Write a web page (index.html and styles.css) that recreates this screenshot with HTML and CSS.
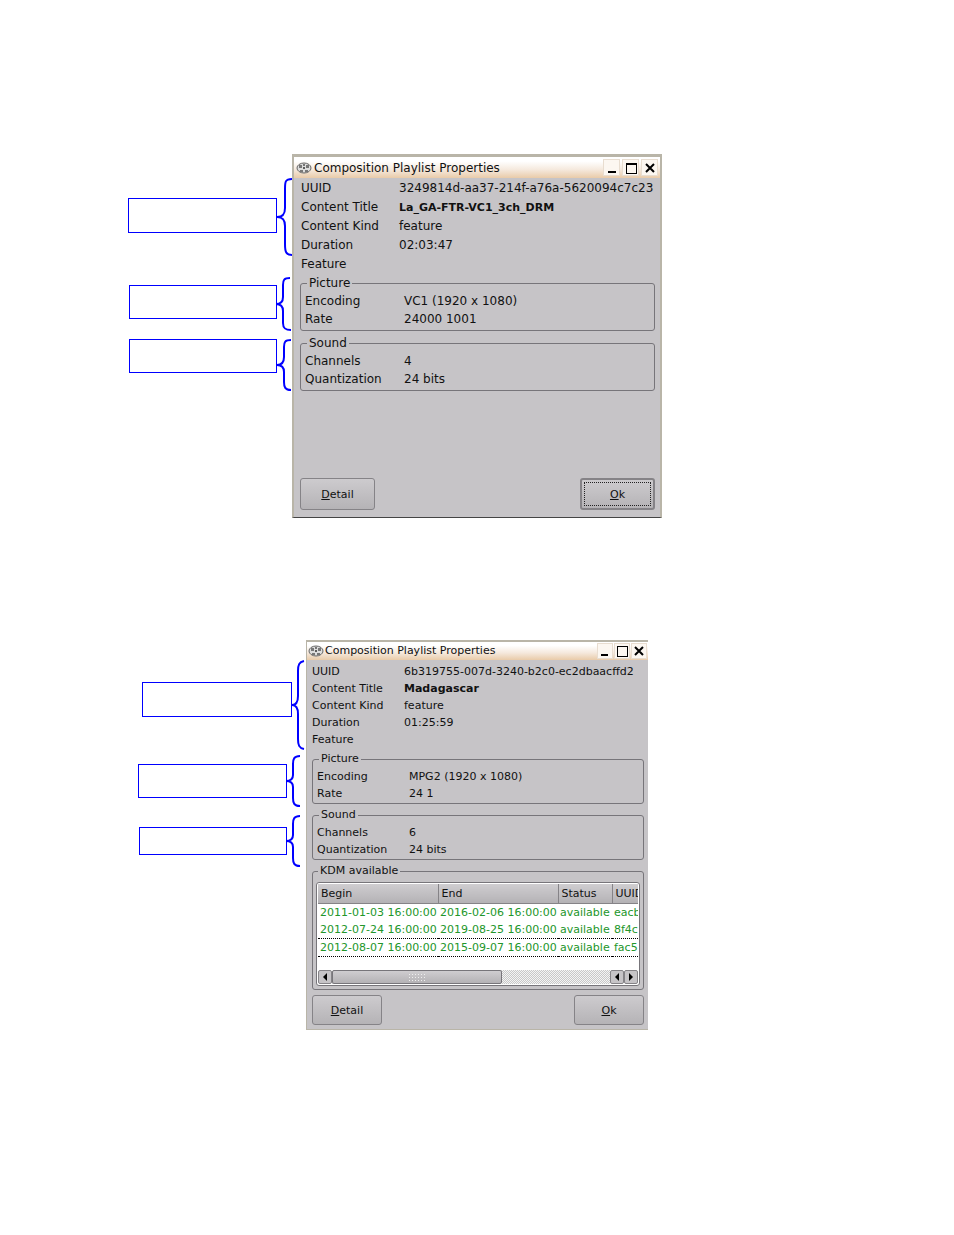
FILE: index.html
```html
<!DOCTYPE html>
<html lang="en">
<head>
    <meta charset="UTF-8">
    <meta name="viewport" content="width=device-width, initial-scale=1.0">
    <title>Composition Playlist Properties</title>
    <link rel="stylesheet" href="styles.css">
</head>
<body>
    <main>
        <section class="figure">
            <div class="callouts">
                <div class="callout callout-info">
                    <div class="callout-box"></div>
                    <svg class="brace" width="16" height="80" viewBox="0 0 16 80"><path d="M16 2C9 2 9 5 9 12V31C9 37 7 40 1 40C7 40 9 43 9 49V67C9 75 10 78 16 78"/></svg>
                </div>
                <div class="callout callout-picture">
                    <div class="callout-box"></div>
                    <svg class="brace" width="16" height="54" viewBox="0 0 16 54"><path d="M14 1C8 1 7 3 7 8V20C7 25 5 27 0 27C5 27 7 29 7 34V46C7 51 9 53 15 53"/></svg>
                </div>
                <div class="callout callout-sound">
                    <div class="callout-box"></div>
                    <svg class="brace" width="16" height="52" viewBox="0 0 16 52"><path d="M15 1C9 1 8 3 8 8V18C8 23 6 26 1 26C6 26 8 28 8 33V43C8 48 9 51 15 51"/></svg>
                </div>
            </div>
            <div class="window">
                <header class="titlebar">
                    <svg class="app-icon" width="16" height="12" viewBox="0 0 16 12"><ellipse cx="8" cy="6" rx="7" ry="5" fill="#ddd" stroke="#666"/><path d="M3 3h3v3H3zM10 3h3v3h-3zM7 2h2v2H7zM4 8h3v2H4zM9 8h3v2H9z" fill="#777"/><circle cx="8" cy="6" r="1" fill="#333"/></svg>
                    <h2>Composition Playlist Properties</h2>
                    <button class="win-btn" aria-label="Minimize"><svg width="12" height="12" viewBox="0 0 12 12"><path d="M2 10h8"/></svg></button>
                    <button class="win-btn" aria-label="Maximize"><svg width="12" height="12" viewBox="0 0 12 12"><path class="thin" d="M1 1h10v10H1zM1 2h10"/></svg></button>
                    <button class="win-btn" aria-label="Close"><svg width="12" height="12" viewBox="0 0 12 12"><path d="M2 2l8 8M10 2l-8 8"/></svg></button>
                </header>
                <dl class="props">
                    <dt>UUID</dt><dd>3249814d-aa37-214f-a76a-5620094c7c23</dd>
                    <dt>Content Title</dt><dd><strong>La_GA-FTR-VC1_3ch_DRM</strong></dd>
                    <dt>Content Kind</dt><dd>feature</dd>
                    <dt>Duration</dt><dd>02:03:47</dd>
                    <dt>Feature</dt><dd></dd>
                </dl>
                <fieldset>
                    <legend>Picture</legend>
                    <dl>
                        <dt>Encoding</dt><dd>VC1 (1920 x 1080)</dd>
                        <dt>Rate</dt><dd>24000 1001</dd>
                    </dl>
                </fieldset>
                <fieldset>
                    <legend>Sound</legend>
                    <dl>
                        <dt>Channels</dt><dd>4</dd>
                        <dt>Quantization</dt><dd>24 bits</dd>
                    </dl>
                </fieldset>
                <footer class="actions">
                    <button class="btn"><u>D</u>etail</button>
                    <button class="btn btn-default"><u>O</u>k</button>
                </footer>
            </div>
        </section>

        <section class="figure figure-kdm">
            <div class="callouts">
                <div class="callout callout-info">
                    <div class="callout-box"></div>
                    <svg class="brace" width="14" height="90" viewBox="0 0 14 90"><path d="M12 1C7 2 6 5 6 11V36C6 42 4 45 0 45C4 45 6 48 6 54V79C6 85 7 88 12 89"/></svg>
                </div>
                <div class="callout callout-picture">
                    <div class="callout-box"></div>
                    <svg class="brace" width="18" height="52" viewBox="0 0 18 52"><path d="M14 1C8 1 7 4 7 9V20C7 24 5 26 0 26C5 26 7 28 7 32V43C7 48 8 51 14 51"/></svg>
                </div>
                <div class="callout callout-sound">
                    <div class="callout-box"></div>
                    <svg class="brace" width="18" height="52" viewBox="0 0 18 52"><path d="M14 1C8 1 7 4 7 9V20C7 24 5 26 0 26C5 26 7 28 7 32V43C7 48 8 51 14 51"/></svg>
                </div>
            </div>
            <div class="window">
                <header class="titlebar">
                    <svg class="app-icon" width="16" height="12" viewBox="0 0 16 12"><ellipse cx="8" cy="6" rx="7" ry="5" fill="#ddd" stroke="#666"/><path d="M3 3h3v3H3zM10 3h3v3h-3zM7 2h2v2H7zM4 8h3v2H4zM9 8h3v2H9z" fill="#777"/><circle cx="8" cy="6" r="1" fill="#333"/></svg>
                    <h2>Composition Playlist Properties</h2>
                    <button class="win-btn" aria-label="Minimize"><svg width="12" height="12" viewBox="0 0 12 12"><path d="M2 10h7"/></svg></button>
                    <button class="win-btn" aria-label="Maximize"><svg width="12" height="12" viewBox="0 0 12 12"><path class="thin" d="M1 1h10v10H1z"/></svg></button>
                    <button class="win-btn" aria-label="Close"><svg width="12" height="12" viewBox="0 0 12 12"><path d="M2 2l8 8M10 2l-8 8"/></svg></button>
                </header>
                <dl class="props">
                    <dt>UUID</dt><dd>6b319755-007d-3240-b2c0-ec2dbaacffd2</dd>
                    <dt>Content Title</dt><dd><strong>Madagascar</strong></dd>
                    <dt>Content Kind</dt><dd>feature</dd>
                    <dt>Duration</dt><dd>01:25:59</dd>
                    <dt>Feature</dt><dd></dd>
                </dl>
                <fieldset>
                    <legend>Picture</legend>
                    <dl>
                        <dt>Encoding</dt><dd>MPG2 (1920 x 1080)</dd>
                        <dt>Rate</dt><dd>24 1</dd>
                    </dl>
                </fieldset>
                <fieldset>
                    <legend>Sound</legend>
                    <dl>
                        <dt>Channels</dt><dd>6</dd>
                        <dt>Quantization</dt><dd>24 bits</dd>
                    </dl>
                </fieldset>
                <fieldset class="kdm">
                    <legend>KDM available</legend>
                    <div class="list">
                        <div class="list-view">
                            <table>
                                <thead>
                                    <tr>
                                        <th class="col-date">Begin</th>
                                        <th class="col-date">End</th>
                                        <th class="col-status">Status</th>
                                        <th>UUID</th>
                                    </tr>
                                </thead>
                                <tbody>
                                    <tr><td>2011-01-03 16:00:00</td><td>2016-02-06 16:00:00</td><td>available</td><td>eacb</td></tr>
                                    <tr><td>2012-07-24 16:00:00</td><td>2019-08-25 16:00:00</td><td>available</td><td>8f4c</td></tr>
                                    <tr class="focused"><td>2012-08-07 16:00:00</td><td>2015-09-07 16:00:00</td><td>available</td><td>fac5</td></tr>
                                </tbody>
                            </table>
                        </div>
                        <div class="scrollbar">
                            <button class="arrow" aria-label="Scroll left"><svg width="6" height="8" viewBox="0 0 6 8"><path d="M5 0v8L1 4z"/></svg></button>
                            <div class="track"><div class="thumb"><span class="grip"></span></div></div>
                            <button class="arrow" aria-label="Scroll left"><svg width="6" height="8" viewBox="0 0 6 8"><path d="M5 0v8L1 4z"/></svg></button>
                            <button class="arrow" aria-label="Scroll right"><svg width="6" height="8" viewBox="0 0 6 8"><path d="M1 0v8l4-4z"/></svg></button>
                        </div>
                    </div>
                </fieldset>
                <footer class="actions">
                    <button class="btn"><u>D</u>etail</button>
                    <button class="btn"><u>O</u>k</button>
                </footer>
            </div>
        </section>
    </main>
</body>
</html>
```
FILE: styles.css
```css
* {
    box-sizing: border-box;
}
body {
    margin: 0;
    background-color: #fff;
    color: #111;
    font-family: "DejaVu Sans", sans-serif;
    font-size: 12px;
}
main {
    display: flex;
    flex-direction: column;
    gap: 122px;
    padding: 154px 40px 40px 128px;
}
.figure {
    display: grid;
    grid-template-columns: 164px minmax(0, 370px);
    line-height: 18px;
}
.figure-kdm {
    grid-template-columns: 178px minmax(0, 342px);
    font-size: 11px;
}

/* Callouts */
.callouts {
    padding-top: 23px;
}
.callout {
    display: flex;
    align-items: center;
    justify-content: flex-end;
}
.callout-box {
    width: 149px;
    height: 35px;
    margin-right: -1px;
    margin-bottom: 4px;
    border: 1px solid #00f;
}
.callout-picture {
    margin-top: 20px;
}
.callout-sound {
    margin-top: 8px;
    align-items: flex-start;
}
.callout-picture .callout-box,
.callout-sound .callout-box {
    width: 148px;
    height: 34px;
}
.brace {
    flex: none;
    fill: none;
    stroke: #00f;
    stroke-width: 2;
}
.figure-kdm .callouts {
    padding-top: 20px;
}
.figure-kdm .callout-box {
    width: 150px;
    margin-right: 0;
    margin-bottom: 12px;
}
.figure-kdm .callout-picture {
    margin-top: 5px;
    padding-right: 2px;
}
.figure-kdm .callout-sound {
    margin-top: 8px;
    padding-right: 2px;
    align-items: center;
}
.figure-kdm .callout-picture .callout-box,
.figure-kdm .callout-sound .callout-box {
    width: 149px;
    margin-right: -1px;
    margin-bottom: 0;
}
.figure-kdm .callout-sound .callout-box {
    width: 148px;
    height: 28px;
}

/* Windows */
.window {
    display: flex;
    flex-direction: column;
    min-height: 364px;
    padding: 0 5px 7px 6px;
    background-color: #c6c4c7;
    border: 2px solid #b9b5a8;
    border-top-width: 3px;
    border-bottom: 1px solid #444;
}
.figure-kdm .window {
    min-height: 390px;
    padding: 0 4px 4px 5px;
    border-width: 2px 0 1px 1px;
    border-bottom-color: #b9b5a8;
}
.titlebar {
    display: flex;
    align-items: center;
    gap: 2px;
    height: 21px;
    margin: 0 -5px 0 -6px;
    padding: 0 2px;
    background: linear-gradient(#fff 20%, #f5e9dd 60%, #e9cba9);
}
.figure-kdm .titlebar {
    height: 18px;
    margin: 0 -4px 0 -5px;
    padding: 0 1px;
    gap: 1px;
}
.titlebar h2 {
    flex: 1;
    margin: 0;
    font-size: inherit;
    font-weight: normal;
    white-space: nowrap;
}
.app-icon {
    flex: none;
}
.win-btn {
    display: flex;
    align-items: center;
    justify-content: center;
    width: 17px;
    height: 17px;
    padding: 0;
    background-color: #fcf7f1;
    border: 1px solid #e8ddd0;
}
.figure-kdm .win-btn {
    width: 16px;
    height: 16px;
}
.win-btn path {
    fill: none;
    stroke: #000;
    stroke-width: 2;
}
.win-btn .thin {
    stroke-width: 1;
    shape-rendering: crispEdges;
}

/* Properties */
dl {
    display: grid;
    grid-template-columns: 99px 1fr;
    margin: 0;
    white-space: nowrap;
}
.figure-kdm dl {
    grid-template-columns: 92px 1fr;
    line-height: 17px;
}
.props {
    grid-template-columns: 98px 1fr;
    padding: 1px 1px 0;
    line-height: 19px;
}
.figure-kdm .props {
    padding: 3px 0 2px;
}
dd {
    margin: 0;
}
strong {
    font-size: 11px;
}
fieldset {
    min-width: 0;
    margin: 0 0 3px;
    padding: 0 4px 2px;
    border: 1px solid #77757a;
    border-radius: 3px;
}
.figure-kdm fieldset {
    margin-bottom: 2px;
    padding-bottom: 1px;
}
legend {
    margin-left: 2px;
    padding: 0 2px;
}

/* KDM list */
.figure-kdm .kdm {
    padding: 2px 3px 3px;
}
.list {
    padding: 1px;
    background-color: #fff;
    border: 1px solid #77757a;
    border-radius: 3px;
}
.list-view {
    height: 86px;
    overflow: hidden;
}
table {
    width: 420px;
    table-layout: fixed;
    border-collapse: collapse;
}
.col-date {
    width: 120px;
}
.col-status {
    width: 54px;
}
th {
    height: 19px;
    padding: 1px 3px 0;
    background: linear-gradient(#cfcdd0, #b4b2b5);
    border-right: 1px solid #858387;
    border-bottom: 1px solid #858387;
    font-weight: normal;
    text-align: left;
}
td {
    height: 17px;
    padding: 0 2px;
    color: #22962a;
    line-height: 17px;
    white-space: nowrap;
}
.focused td {
    border-top: 1px dotted #000;
    border-bottom: 1px dotted #000;
}
.scrollbar {
    display: flex;
    height: 14px;
}
.arrow {
    display: flex;
    align-items: center;
    justify-content: center;
    width: 14px;
    padding: 0;
    background-color: #c6c4c7;
    border: 1px solid #858387;
    border-radius: 2px;
}
.track {
    flex: 1;
    background: repeating-conic-gradient(#c8c8c8 0 25%, #f4f4f4 0 50%) 0 0 / 2px 2px;
}
.thumb {
    display: flex;
    align-items: center;
    justify-content: center;
    width: 61%;
    height: 14px;
    background: linear-gradient(#cfcdd0, #b4b2b5);
    border: 1px solid #77757a;
    border-radius: 2px;
}
.grip {
    width: 18px;
    height: 9px;
    background: radial-gradient(circle, #eee 1px, transparent 1px) 0 0 / 3px 3px;
}

/* Buttons */
.actions {
    display: flex;
    justify-content: space-between;
    margin-top: auto;
}
.btn {
    width: 75px;
    height: 32px;
    padding: 0;
    background: linear-gradient(#cdcbce, #b5b3b6);
    border: 1px solid #858387;
    border-radius: 3px;
    color: #111;
    font-family: inherit;
    font-size: 11px;
}
.figure-kdm .btn {
    width: 70px;
    height: 30px;
}
.btn-default {
    border-width: 2px;
    outline: 1px dotted #222;
    outline-offset: -5px;
}
```
